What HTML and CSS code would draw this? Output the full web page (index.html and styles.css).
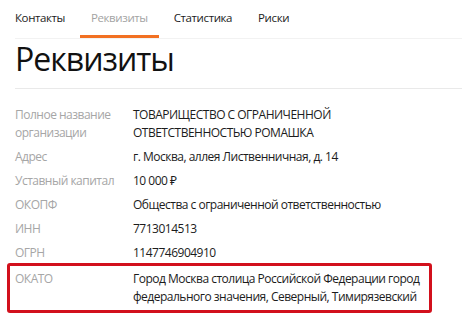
FILE: index.html
```html
<!DOCTYPE html>
<html lang="ru">
<head>
<meta charset="utf-8">
<link rel="stylesheet" href="styles.css">
</head>
<body>
<div class="page">
  <nav class="tabs">
    <span class="tab">Контакты</span>
    <span class="tab active">Реквизиты</span>
    <span class="tab">Статистика</span>
    <span class="tab">Риски</span>
  </nav>
  <h1 class="title">Реквизиты</h1>
  <div class="list">
    <div class="row"><div class="label">Полное название организации</div><div class="value">ТОВАРИЩЕСТВО С ОГРАНИЧЕННОЙ ОТВЕТСТВЕННОСТЬЮ РОМАШКА</div></div>
    <div class="row"><div class="label">Адрес</div><div class="value">г. Москва, аллея Лиственничная, д. 14</div></div>
    <div class="row"><div class="label">Уставный капитал</div><div class="value">10 000 ₽</div></div>
    <div class="row"><div class="label">ОКОПФ</div><div class="value">Общества с ограниченной ответственностью</div></div>
    <div class="row"><div class="label">ИНН</div><div class="value">7713014513</div></div>
    <div class="row"><div class="label">ОГРН</div><div class="value">1147746904910</div></div>
    <div class="row highlight"><div class="label">ОКАТО</div><div class="value">Город Москва столица Российской Федерации город федерального значения, Северный, Тимирязевский</div></div>
  </div>
</div>
</body>
</html>
```
FILE: styles.css
```css
html, body {
  margin: 0;
  padding: 0;
  background: #ffffff;
}
body {
  font-family: "Open Sans", "Noto Sans", sans-serif;
  color: #1c1c1c;
}
.page {
  padding: 0 12px 0 15px;
}
.tabs {
  display: flex;
  height: 38px;
  border-bottom: 1px solid #f2f2f2;
  font-size: 11.5px;
  letter-spacing: -0.4px;
  line-height: 18px;
}
.tab {
  position: relative;
  padding: 9px 13px 0;
  color: #1c1c1c;
}
.tab:first-child {
  padding-left: 0;
}
.tab.active {
  color: #a3a3a3;
}
.tab.active::after {
  content: "";
  position: absolute;
  left: 2px;
  right: 2px;
  bottom: 0;
  height: 3px;
  background: #f27022;
}
.title {
  margin: 0;
  font-weight: 400;
  font-size: 32px;
  letter-spacing: -1px;
  line-height: 40px;
  padding-bottom: 9px;
  border-bottom: 1px solid #e9e9e9;
  color: #111;
}
.list {
  padding-top: 14px;
  font-size: 12px;
  letter-spacing: -0.5px;
  line-height: 18px;
}
.row {
  display: flex;
  padding: 3px 0;
}
.label {
  width: 118px;
  flex: none;
  color: #a6a6a6;
}
.value {
  width: 293px;
  color: #1c1c1c;
}
.highlight {
  margin: -2px 0 0 -8px;
  width: 414px;
  border: 3px solid #d2101c;
  border-radius: 3px;
  padding: 4px 0 4px 5px;
}
.highlight .value {
  width: 291px;
}
```
